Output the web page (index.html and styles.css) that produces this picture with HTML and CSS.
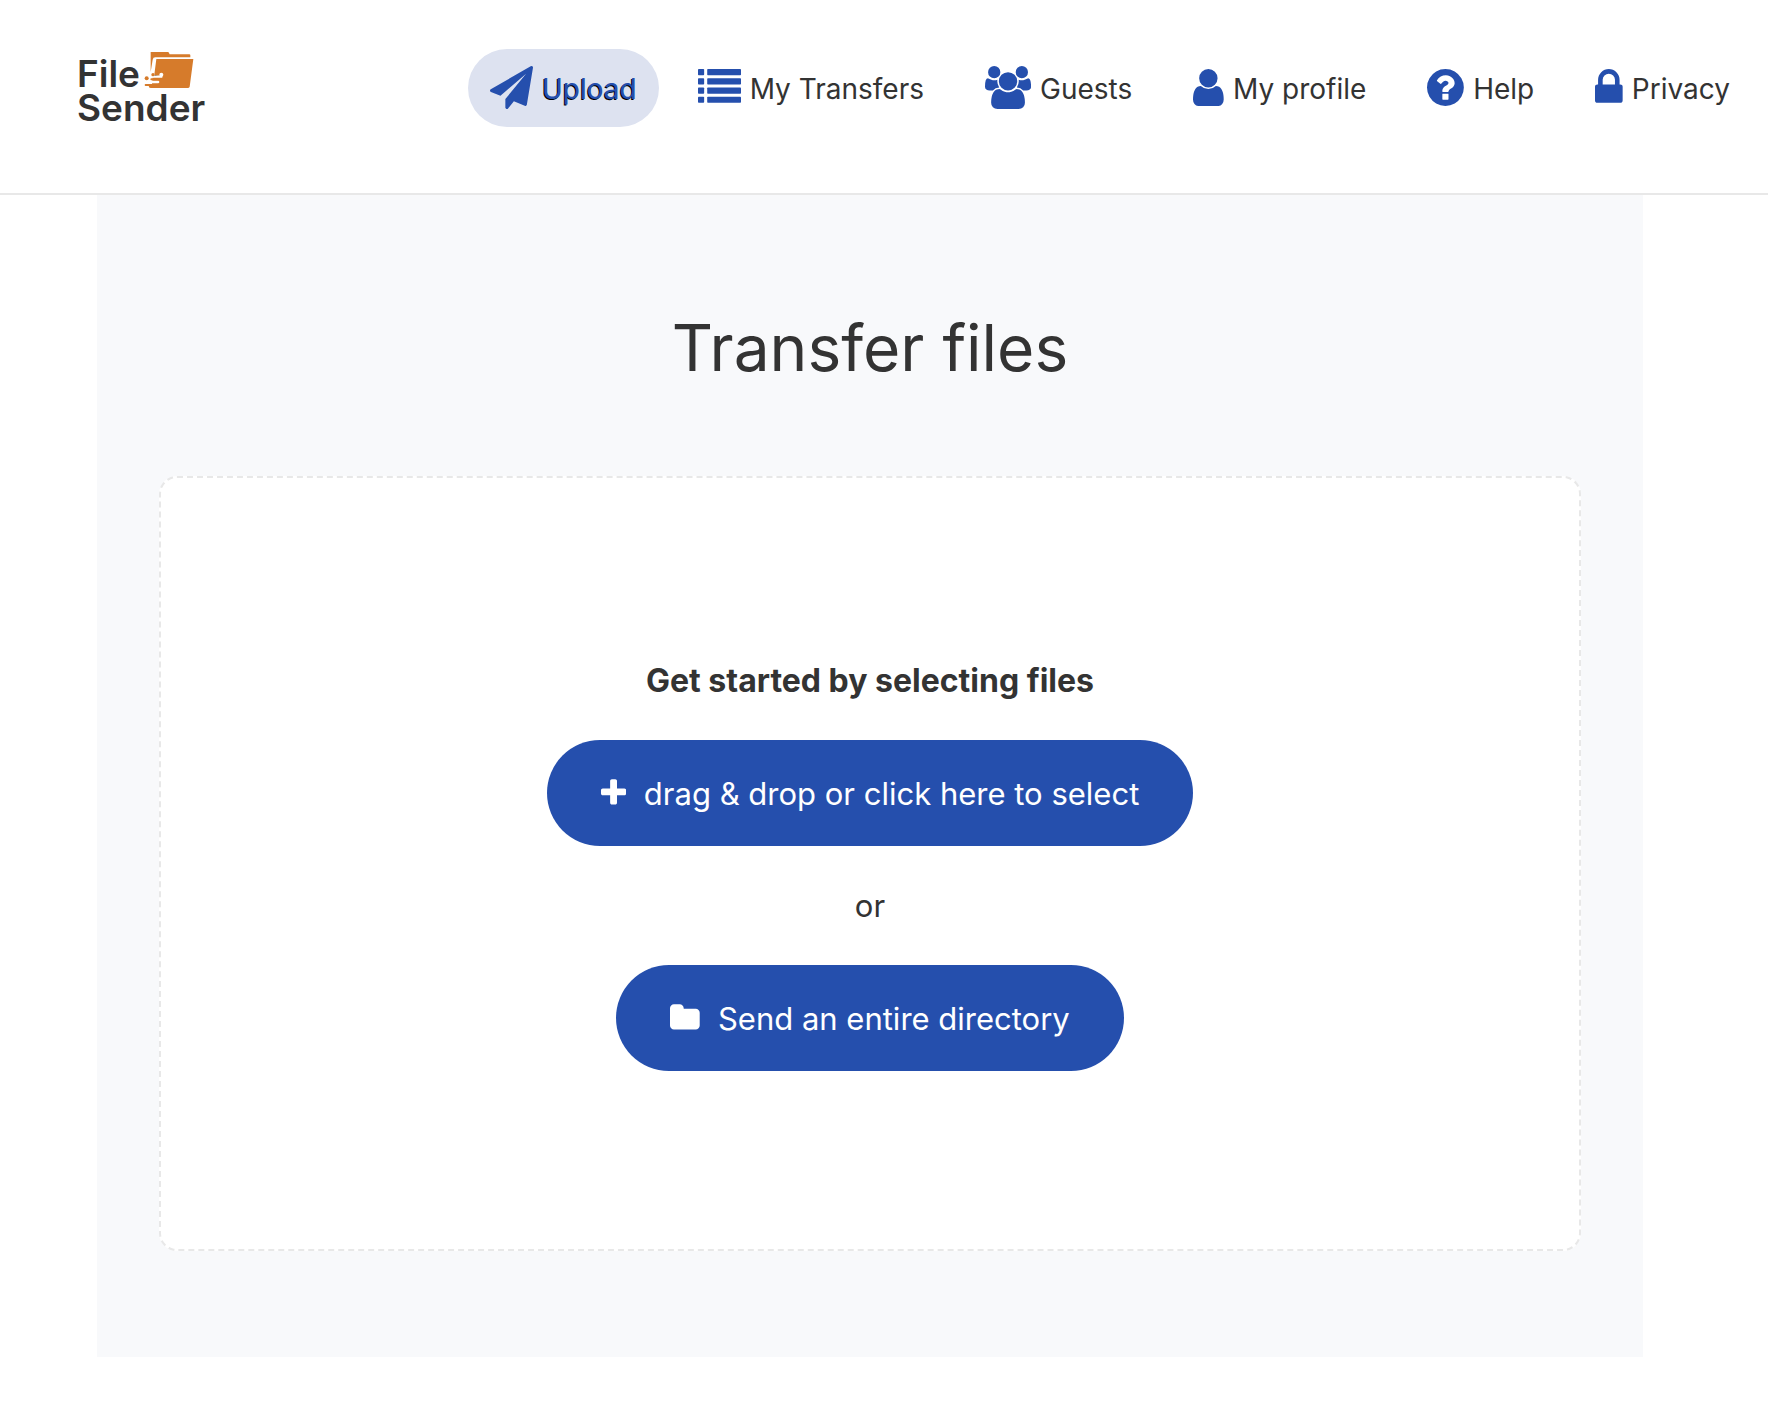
FILE: index.html
```
<!DOCTYPE html>
<html lang="en">
<head>
	<meta charset="utf-8">
	<title>FileSender</title>
	<link rel="stylesheet" href="styles.css">
</head>
<body>
	<header class="header">
		<a href="#" class="logo">
			<span class="logo-row">File
				<svg class="logo-folder" viewBox="0 0 150 108" aria-hidden="true">
					<path fill="#d67b2b" d="M20 0H72Q74 0 75 3L77 7H136Q139 7 139 10V16H34Q27 16 26 23L20 60Z"/>
					<path fill="#d67b2b" d="M37 21H148L137 104Q136 108 131 108H20Q14 108 14 101H5V96H24L26 76H30Z"/>
					<path stroke="#fff" stroke-width="8" stroke-linecap="round" d="M20 90H42"/>
					<path stroke="#fff" stroke-width="7" stroke-linecap="round" d="M28 68V74H52"/>
					<path stroke="#d67b2b" stroke-width="6" stroke-linecap="round" d="M22 82H42M5 99H24"/>
					<circle fill="#d67b2b" cx="8" cy="79" r="6"/>
					<circle fill="#d67b2b" cx="27" cy="68" r="5"/>
					<circle fill="#fff" cx="52" cy="68" r="6"/>
				</svg>
			</span>
			<span class="logo-row">Sender</span>
		</a>
		<nav class="menu">
			<a href="#" class="menu-item active">
				<svg class="icon" viewBox="0 0 1792 1792"><path d="M1764 11q33 24 27 64l-256 1536q-5 29-32 45-14 8-31 8-11 0-24-5l-453-185-242 295q-18 23-49 23-13 0-22-4-19-7-30.500-23.500t-11.500-36.500v-349l864-1059-1069 925-395-162q-37-14-40-55-2-40 32-59l1664-960q15-9 32-9 20 0 36 11z"/></svg>
				<span>Upload</span>
			</a>
			<a href="#" class="menu-item">
				<svg class="icon" viewBox="0 0 1792 1792">
					<rect x="0" y="128" width="256" height="256" rx="32"/><rect x="384" y="128" width="1408" height="256" rx="32"/>
					<rect x="0" y="512" width="256" height="256" rx="32"/><rect x="384" y="512" width="1408" height="256" rx="32"/>
					<rect x="0" y="896" width="256" height="256" rx="32"/><rect x="384" y="896" width="1408" height="256" rx="32"/>
					<rect x="0" y="1280" width="256" height="256" rx="32"/><rect x="384" y="1280" width="1408" height="256" rx="32"/>
				</svg>
				<span>My Transfers</span>
			</a>
			<a href="#" class="menu-item">
				<svg class="icon" viewBox="0 0 1920 1792"><path d="M593 896q-162 5-265 128h-134q-82 0-138-40.500t-56-118.500q0-353 124-353 6 0 43.500 21t97.500 42.500 119 21.500q67 0 133-23-5 37-5 66 0 139 81 256zm1071 637q0 120-73 189.500t-194 69.500h-874q-121 0-194-69.500t-73-189.500q0-53 3.500-103.500t14-109 26.500-108.500 43-97.500 62-81 85.500-53.500 111.500-20q10 0 43 21.500t73 48 107 48 135 21.500 135-21.500 107-48 73-48 43-21.500q61 0 111.500 20t85.500 53.500 62 81 43 97.500 26.500 108.500 14 109 3.500 103.500zm-1024-1277q0 106-75 181t-181 75-181-75-75-181 75-181 181-75 181 75 75 181zm704 384q0 159-112.500 271.500t-271.500 112.500-271.500-112.500-112.500-271.500 112.500-271.500 271.500-112.500 271.500 112.500 112.500 271.500zm576 225q0 78-56 118.500t-138 40.500h-134q-103-123-265-128 81-117 81-256 0-29-5-66 66 23 133 23 59 0 119-21.500t97.500-42.500 43.500-21q124 0 124 353zm-128-609q0 106-75 181t-181 75-181-75-75-181 75-181 181-75 181 75 75 181z"/></svg>
				<span>Guests</span>
			</a>
			<a href="#" class="menu-item">
				<svg class="icon" viewBox="256 0 1280 1792"><path d="M1536 1399q0 109-62.500 187t-150.500 78h-854q-88 0-150.500-78t-62.500-187q0-85 8.500-160.500t31.500-152 58.500-131 94-89 134.500-34.500q131 128 313 128t313-128q76 0 134.500 34.500t94 89 58.500 131 31.500 152 8.500 160.500zm-256-887q0 159-112.500 271.500t-271.500 112.500-271.500-112.500-112.500-271.500 112.500-271.500 271.500-112.500 271.500 112.500 112.500 271.500z"/></svg>
				<span>My profile</span>
			</a>
			<a href="#" class="menu-item">
				<svg class="icon" viewBox="128 0 1536 1792"><path d="M1024 1376v-192q0-14-9-23t-23-9h-192q-14 0-23 9t-9 23v192q0 14 9 23t23 9h192q14 0 23-9t9-23zm256-672q0-88-55.500-163t-138.500-116-170-41q-243 0-371 213-15 24 8 42l132 100q7 6 19 6 16 0 25-12 53-68 86-92 34-24 86-24 48 0 85.500 26t37.500 59q0 38-20 61t-68 45q-63 28-115.500 86.500t-52.500 125.500v36q0 14 9 23t23 9h192q14 0 23-9t9-23q0-19 21.500-49.500t54.500-49.500q32-18 49-28.500t46-35 44.500-48 28-60.500 12.500-81zm384 192q0 209-103 385.500t-279.500 279.500-385.500 103-385.500-103-279.500-279.500-103-385.500 103-385.500 279.500-279.500 385.500-103 385.500 103 279.500 279.500 103 385.500z"/></svg>
				<span>Help</span>
			</a>
			<a href="#" class="menu-item">
				<svg class="icon" viewBox="320 0 1152 1792"><path d="M640 768h512v-192q0-106-75-181t-181-75-181 75-75 181v192zm832 96v576q0 40-28 68t-68 28h-960q-40 0-68-28t-28-68v-576q0-40 28-68t68-28h32v-192q0-184 132-316t316-132 316 132 132 316v192h32q40 0 68 28t28 68z"/></svg>
				<span>Privacy</span>
			</a>
		</nav>
	</header>

	<main class="panel">
		<h1>Transfer files</h1>
		<div class="dropzone">
			<h2>Get started by selecting files</h2>
			<button type="button" class="button">
				<svg class="button-icon" viewBox="192 0 1408 1792"><path d="M1600 736v192q0 40-28 68t-68 28h-416v416q0 40-28 68t-68 28h-192q-40 0-68-28t-28-68v-416h-416q-40 0-68-28t-28-68v-192q0-40 28-68t68-28h416v-416q0-40 28-68t68-28h192q40 0 68 28t28 68v416h416q40 0 68 28t28 68z"/></svg>
				drag &amp; drop or click here to select
			</button>
			<p>or</p>
			<button type="button" class="button">
				<svg class="button-icon" viewBox="64 0 1664 1792"><path d="M1728 608v704q0 92-66 158t-158 66h-1216q-92 0-158-66t-66-158v-960q0-92 66-158t158-66h320q92 0 158 66t66 158v32h672q92 0 158 66t66 158z"/></svg>
				Send an entire directory
			</button>
		</div>
	</main>
</body>
</html>
```
FILE: styles.css
```
* {
	box-sizing: border-box;
}
body {
	margin: 0;
	background-color: #fff;
	color: #333;
	font-family: Inter, "Liberation Sans", sans-serif;
	font-size: 31px;
}

/* Header */

.header {
	display: flex;
	justify-content: space-between;
	align-items: flex-start;
	height: 195px;
	padding: 49px 16px 0 77px;
	border-bottom: 2px solid #e8e8e8;
}
.logo {
	color: #333;
	font-size: 37px;
	font-weight: 600;
	line-height: 34px;
	text-decoration: none;
	padding-top: 8px;
}
.logo-row {
	display: flex;
	gap: 4px;
}
.logo-folder {
	width: 50px;
	height: 36px;
	margin-top: -5px;
}
.menu {
	display: flex;
	gap: 17px;
}
.menu-item {
	display: flex;
	align-items: center;
	gap: 9px;
	height: 78px;
	padding: 0 22px;
	border-radius: 39px;
	color: #333;
	font-size: 28px;
	line-height: 40px;
	white-space: nowrap;
	text-decoration: none;
}
.menu-item span {
	padding-top: 2px;
}
.menu-item.active {
	background-color: #dde2f0;
	color: #254fad;
	text-shadow: -1px 1px 0 #000;
}
.icon {
	height: 43px;
	margin-bottom: 2px;
	fill: #254fad;
}

/* Upload panel */

.panel {
	margin: 0 125px 52px 97px;
	padding: 110px 62px 106px;
	background-color: #f8f9fb;
	text-align: center;
}
h1 {
	margin: 0 0 85px;
	font-size: 64px;
	font-weight: 400;
	line-height: 86px;
}
.dropzone {
	display: flex;
	flex-direction: column;
	align-items: center;
	padding: 180px 20px 178px;
	border: 2px dashed #e8e8e8;
	border-radius: 18px;
	background-color: #fff;
}
h2 {
	margin: 0 0 37px;
	font-size: 32px;
	font-weight: 700;
	line-height: 45px;
}
p {
	margin: 37px 0;
	line-height: 45px;
}
.button {
	display: flex;
	align-items: center;
	gap: 18px;
	height: 106px;
	padding: 0 54px;
	border: none;
	border-radius: 53px;
	background-color: #254fad;
	color: #fff;
	font-family: inherit;
	font-size: 31px;
	cursor: pointer;
}
.button-icon {
	height: 32px;
	fill: #fff;
}
```
